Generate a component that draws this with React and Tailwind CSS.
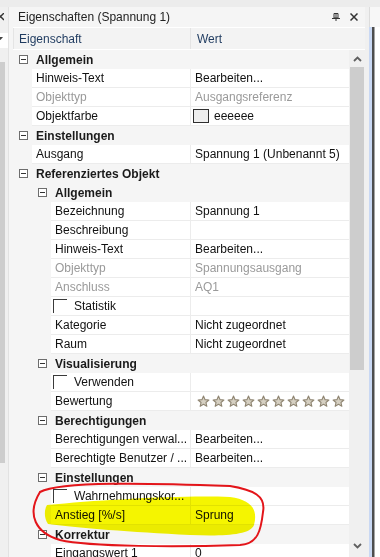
const rows = [
    { cat: true, level: 1, name: "Allgemein" },
    { level: 1, name: "Hinweis-Text", value: "Bearbeiten..." },
    { level: 1, name: "Objekttyp", value: "Ausgangsreferenz", disabled: true },
    { level: 1, name: "Objektfarbe", value: "eeeeee", swatch: true },
    { cat: true, level: 1, name: "Einstellungen" },
    { level: 1, name: "Ausgang", value: "Spannung 1 (Unbenannt 5)" },
    { cat: true, level: 1, name: "Referenziertes Objekt" },
    { cat: true, level: 2, name: "Allgemein" },
    { level: 2, name: "Bezeichnung", value: "Spannung 1" },
    { level: 2, name: "Beschreibung", value: "" },
    { level: 2, name: "Hinweis-Text", value: "Bearbeiten..." },
    { level: 2, name: "Objekttyp", value: "Spannungsausgang", disabled: true },
    { level: 2, name: "Anschluss", value: "AQ1", disabled: true },
    { level: 2, name: "Statistik", value: "", check: true },
    { level: 2, name: "Kategorie", value: "Nicht zugeordnet" },
    { level: 2, name: "Raum", value: "Nicht zugeordnet" },
    { cat: true, level: 2, name: "Visualisierung" },
    { level: 2, name: "Verwenden", value: "", check: true },
    { level: 2, name: "Bewertung", stars: true },
    { cat: true, level: 2, name: "Berechtigungen" },
    { level: 2, name: "Berechtigungen verwal...", value: "Bearbeiten..." },
    { level: 2, name: "Berechtigte Benutzer / ...", value: "Bearbeiten..." },
    { cat: true, level: 2, name: "Einstellungen" },
    { level: 2, name: "Wahrnehmungskor...", value: "", check: true },
    { level: 2, name: "Anstieg [%/s]", value: "Sprung" },
    { cat: true, level: 2, name: "Korrektur" },
    { level: 2, name: "Eingangswert 1", value: "0" },
];

const Expander = () => (
    <span className="w-[9px] h-[9px] border border-[#6d6d6d] bg-white flex items-center justify-center shrink-0">
        <span className="w-[5px] h-px bg-[#333]" />
    </span>
);

const Star = () => (
    <svg width="13" height="13" viewBox="0 0 24 24" className="shrink-0">
        <path
            d="M12 2l2.9 6.6 7.1.6-5.4 4.7 1.6 7-6.2-3.7-6.2 3.7 1.6-7L2 9.2l7.1-.6z"
            fill="#d6d0c2"
            stroke="#8f8572"
            strokeWidth="2"
            strokeLinejoin="round"
        />
    </svg>
);

const Row = ({ r }) => {
    if (r.cat) {
        return (
            <div className="flex h-[19px] items-center">
                <div className={r.level === 1 ? "w-[6px]" : "w-[25px]"} />
                <Expander />
                <span className="ml-[8px] font-bold text-[#1a1a1a]">{r.name}</span>
            </div>
        );
    }
    const textColor = r.disabled ? "text-[#9a9a9a]" : "text-[#111]";
    return (
        <div className="flex h-[19px]">
            <div className="w-[177px] flex">
                <div className={r.level === 1 ? "w-[19px]" : "w-[38px]"} />
                <div className={`flex-1 bg-white border-b border-[#ececec] flex items-center overflow-hidden whitespace-nowrap ${r.check ? "pl-[2px]" : "pl-[4px]"} ${textColor}`}>
                    {r.check && <span className="w-[14px] h-[14px] border-t border-l border-[#3a3a3a] mr-[7px] shrink-0" />}
                    {r.name}
                </div>
            </div>
            <div className={`flex-1 bg-white border-l border-b border-[#ececec] flex items-center whitespace-nowrap pl-[4px] ${textColor}`}>
                {r.swatch && (
                    <>
                        <span className="w-[16px] h-[14px] border border-[#2f2f2f] bg-[#eeeeee] mr-[5px] -ml-[2px]" />
                        {r.value}
                    </>
                )}
                {r.stars && (
                    <div className="flex gap-[2px] ml-[2px]">
                        {Array.from({ length: 10 }).map((_, i) => (
                            <Star key={i} />
                        ))}
                    </div>
                )}
                {!r.swatch && !r.stars && r.value}
            </div>
        </div>
    );
};

const App = () => {
    return (
        <div
            className="relative w-[380px] h-[557px] overflow-hidden bg-[#f0f0f0] flex flex-col text-[12px] leading-none"
            style={{ fontFamily: '"Liberation Sans", Arial, sans-serif' }}
        >
            <div className="h-[7px] bg-[#ececec] shrink-0" />
            <div className="flex flex-1 min-h-0">
                {/* Left sliver */}
                <div className="w-[9px] flex flex-col border-r border-[#e2e2e2] bg-[#f0f0f0]">
                    <div className="h-[20px] flex items-center overflow-hidden">
                        <svg width="4" height="8" viewBox="3 0 4 8">
                            <path d="M0 0L7 7M7 0L0 7" stroke="#333" strokeWidth="1.4" />
                        </svg>
                    </div>
                    <div className="h-[6px]" />
                    <div className="h-[15px] bg-white flex items-start pt-[4px]">
                        <svg width="3" height="4" viewBox="2 0 3 4">
                            <path d="M0 0H5L2.5 3z" fill="#444" />
                        </svg>
                    </div>
                    <div className="h-[14px]" />
                    <div className="w-[5px] h-[401px] bg-[#cdcdcd]" />
                </div>

                {/* Properties panel */}
                <div className="w-[356px] flex flex-col bg-[#f5f5f5]">
                    <div className="h-[20px] flex items-center justify-between pl-[9px] pr-[7px] shrink-0">
                        <span className="text-[#222]">Eigenschaften (Spannung 1)</span>
                        <div className="flex items-center gap-[10px]">
                            <svg width="8" height="8" viewBox="0 0 8 8">
                                <path d="M2 0.5H6V5H2z" fill="none" stroke="#333" strokeWidth="1" />
                                <path d="M4 0.5V5" stroke="#333" strokeWidth="1" />
                                <path d="M0 5.5H8" stroke="#333" strokeWidth="1" />
                                <path d="M4 5.5V8" stroke="#333" strokeWidth="1" />
                            </svg>
                            <svg width="8" height="8" viewBox="0 0 8 8">
                                <path d="M0.5 0.5L7.5 7.5M7.5 0.5L0.5 7.5" stroke="#333" strokeWidth="1.5" />
                            </svg>
                        </div>
                    </div>
                    <div className="ml-[4px] h-[23px] flex border-t border-white border-b border-[#dedede] bg-[#f3f3f3] text-[#1e3a5f] shrink-0">
                        <div className="w-[177px] flex items-center pl-[5px] border-l border-[#e4e4e4]">Eigenschaft</div>
                        <div className="flex-1 flex items-center pl-[6px] border-l border-[#e4e4e4]">Wert</div>
                    </div>
                    <div className="flex flex-1 min-h-0 ml-[4px]">
                        <div className="w-[336px] overflow-hidden">
                            {rows.map((r, i) => (
                                <Row key={i} r={r} />
                            ))}
                        </div>
                        <div className="w-[16px] flex flex-col bg-[#f0f0f0]">
                            <div className="h-[17px] flex items-center justify-center">
                                <svg width="9" height="6" viewBox="0 0 9 6">
                                    <path d="M1 5L4.5 1.5L8 5" fill="none" stroke="#606060" strokeWidth="1.8" />
                                </svg>
                            </div>
                            <div className="h-[303px] mx-[1px] bg-[#cdcdcd]" />
                            <div className="h-[168px]" />
                            <div className="h-[16px] flex items-center justify-center">
                                <svg width="9" height="6" viewBox="0 0 9 6">
                                    <path d="M1 1L4.5 4.5L8 1" fill="none" stroke="#606060" strokeWidth="1.8" />
                                </svg>
                            </div>
                        </div>
                    </div>
                </div>

                {/* Right edge: neighbouring window */}
                <div className="flex-1 flex flex-col">
                    <div className="h-[20px] flex">
                        <div className="w-[4px] bg-[#f0f0f0]" />
                        <div className="flex-1 bg-[#f7f7f7] border-l border-[#dcdcdc]" />
                    </div>
                    <div className="flex-1 flex">
                        <div className="w-[4px] bg-[#f0f0f0]" />
                        <div className="w-[3px] bg-[#c9d8f3]" />
                        <div className="w-[2px] bg-[#4d4d4d]" />
                        <div className="w-[1px] bg-[#a5a5a5]" />
                        <div className="flex-1 bg-white" />
                    </div>
                </div>
            </div>

            {/* Marker highlight */}
            <svg className="absolute inset-0 pointer-events-none mix-blend-multiply" width="380" height="557" viewBox="0 0 380 557">
                <path
                    d="M47 505 C100 500 180 495 230 497 C252 500 258 510 254 525 C250 536 220 536 190 535 C130 532 80 528 48 524 C44 518 44 510 47 505 Z"
                    fill="#f5f500"
                />
            </svg>
            {/* Red circle */}
            <svg className="absolute inset-0 pointer-events-none" width="380" height="557" viewBox="0 0 380 557">
                <path
                    d="M40 492 C60 481 150 483 230 486 C254 490 266 496 263 512 C261 530 258 544 240 545 C180 547 90 547 60 540 C36 533 26 515 40 492"
                    fill="none"
                    stroke="#e3151a"
                    strokeWidth="2"
                    strokeLinecap="round"
                />
            </svg>
        </div>
    );
};

export default App;
